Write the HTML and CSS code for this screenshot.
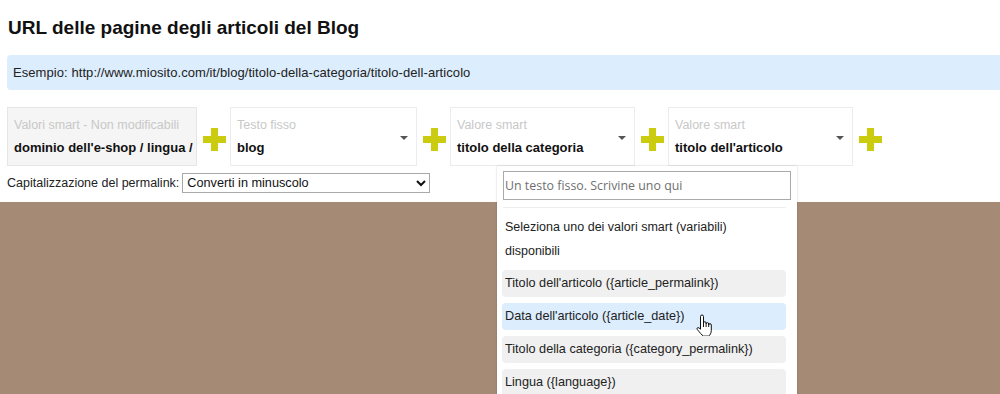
FILE: index.html
```html
<!DOCTYPE html>
<html lang="it">

<head>
    <meta charset="UTF-8">
    <title>URL delle pagine degli articoli del Blog</title>
    <link rel="stylesheet" href="styles.css">
</head>

<body>

    <div class="page">
        <h1>URL delle pagine degli articoli del Blog</h1>

        <div class="example">Esempio: http://www.miosito.com/it/blog/titolo-della-categoria/titolo-dell-articolo</div>

        <div class="fields">
            <div class="field field-locked w1">
                <div class="field-body">
                    <div class="field-label">Valori smart - Non modificabili</div>
                    <div class="field-value">dominio dell'e-shop / lingua /</div>
                </div>
            </div>
            <span class="plus"></span>
            <div class="field w2">
                <div class="field-body">
                    <div class="field-label">Testo fisso</div>
                    <div class="field-value">blog</div>
                </div>
                <span class="caret"></span>
            </div>
            <span class="plus"></span>
            <div class="field w3 field-open">
                <div class="field-body">
                    <div class="field-label">Valore smart</div>
                    <div class="field-value">titolo della categoria</div>
                </div>
                <span class="caret"></span>

                <!-- menu aperto sul terzo campo -->
                <div class="menu">
                    <input class="menu-input" type="text" placeholder="Un testo fisso. Scrivine uno qui">
                    <div class="menu-list">
                        <div class="menu-help">Seleziona uno dei valori smart (variabili) disponibili</div>
                        <div class="menu-item">Titolo dell'articolo ({article_permalink})</div>
                        <div class="menu-item active">Data dell'articolo ({article_date})
                            <svg class="hand" width="18" height="23" viewBox="0 0 18 23">
                                <path d="M5.5,2.5 a1.5,1.5 0 0 1 3,0 V9 a1.3,1.3 0 0 1 2.6,0 V10 a1.3,1.3 0 0 1 2.6,0 V11 a1.3,1.3 0 0 1 2.6,0 V16.5 c0,2.6 -1.4,4.6 -2.6,5.6 H8.3 c-1.6,-1.2 -3.4,-3.4 -6,-6.6 c-0.9,-1.1 0.3,-2.5 1.7,-1.6 L5.5,15.2 Z" fill="#fff" stroke="#111" stroke-width="1" stroke-linejoin="round"/>
                                <path d="M8.5,9 V13 M11.1,10 V13 M13.7,11 V13" stroke="#111" stroke-width="1"/>
                            </svg>
                        </div>
                        <div class="menu-item">Titolo della categoria ({category_permalink})</div>
                        <div class="menu-item">Lingua ({language})</div>
                    </div>
                </div>
            </div>
            <span class="plus"></span>
            <div class="field w3">
                <div class="field-body">
                    <div class="field-label">Valore smart</div>
                    <div class="field-value">titolo dell'articolo</div>
                </div>
                <span class="caret"></span>
            </div>
            <span class="plus"></span>
        </div>

        <div class="caps">
            <label for="caps">Capitalizzazione del permalink:</label>
            <select id="caps">
                <option>Converti in minuscolo</option>
                <option>Converti in maiuscolo</option>
                <option>Nessuna modifica</option>
            </select>
        </div>
    </div>

    <div class="backdrop"></div>

</body>

</html>
```

FILE: styles.css
```css
html,
body {
    height: 100%;
}

body {
    margin: 0;
    font-family: 'Liberation Sans', Arial, sans-serif;
    font-size: 13px;
    color: #222;
    display: flex;
    flex-direction: column;
    overflow: hidden;
}

.page {
    background: white;
    padding: 17px 0 9px 7px;
}

h1 {
    margin: 0 0 16px 1px;
    font-size: 19px;
    line-height: 22px;
    color: #111;
}

.example {
    background: #dcedfd;
    border-radius: 4px 0 0 4px;
    height: 35px;
    line-height: 35px;
    padding-left: 6px;
    color: #222;
    letter-spacing: 0.07px;
}

.fields {
    display: flex;
    margin-top: 17px;
}

.field {
    position: relative;
    display: flex;
    box-sizing: border-box;
    height: 59px;
    padding: 8px 8px 8px 6px;
    border: 1px solid #ececec;
    background: white;
}

.field-locked {
    background: #f5f5f5;
    border-color: #e6e6e6;
}

.w1 {
    width: 190px;
}

.w2 {
    width: 187px;
}

.w3 {
    width: 185px;
}

.field-body {
    flex: 1;
    white-space: nowrap;
}

.field-label {
    line-height: 18px;
    font-size: 12.5px;
    color: #c8c8c8;
}

.field-value {
    margin-top: 5px;
    line-height: 18px;
    font-weight: bold;
    color: #111;
}

.caret {
    align-self: center;
    margin-top: 3px;
    width: 0;
    height: 0;
    border-left: 4px solid transparent;
    border-right: 4px solid transparent;
    border-top: 4px solid #555;
}

.plus {
    position: relative;
    flex: none;
    width: 23px;
    height: 23px;
    margin: 21px 4px 0 6px;
}

.plus::before,
.plus::after {
    content: "";
    position: absolute;
    background: #cbcb10;
}

.plus::before {
    left: 0;
    right: 0;
    top: 8px;
    height: 7px;
}

.plus::after {
    top: 0;
    bottom: 0;
    left: 8px;
    width: 7px;
}

.caps {
    display: flex;
    align-items: center;
    margin-top: 7px;
    height: 20px;
    font-size: 12.5px;
}

.caps select {
    margin-left: 3px;
    width: 248px;
    height: 20px;
    border: 1px solid #a9a9a9;
    font-family: 'Liberation Sans', Arial, sans-serif;
    font-size: 12.7px;
    color: #111;
    background: white;
    padding: 0;
}

.backdrop {
    flex: 1;
    background: #a58b76;
}

/* menu a tendina */
.menu {
    position: absolute;
    left: 46px;
    top: 58px;
    z-index: 5;
    width: 300px;
    height: 240px;
    box-sizing: border-box;
    padding: 5px 6px 0 6px;
    background: white;
    box-shadow: 0 0 2px rgba(0, 0, 0, 0.2);
}

.menu-input {
    display: block;
    box-sizing: border-box;
    width: 100%;
    height: 29px;
    margin: 0;
    padding: 0 1px;
    border: 1px solid #aaa;
    font-family: 'Open Sans', sans-serif;
    font-size: 12.4px;
}

.menu-input::placeholder {
    color: #6f6f6f;
}

.menu-list {
    margin-top: 7px;
    margin-right: 5px;
    border-top: 1px solid #eee;
    padding-top: 7px;
}

.menu-help {
    max-width: 240px;
    padding-left: 2px;
    line-height: 24px;
    margin-bottom: 7px;
    font-size: 12.5px;
}

.menu-item {
    position: relative;
    height: 27px;
    line-height: 27px;
    padding-left: 3px;
    margin: 0 0 6px -1px;
    border-radius: 4px;
    background: #f0f0f0;
    white-space: nowrap;
    font-size: 12.7px;
}

.menu-item.active {
    background: #dcedfd;
}

.hand {
    position: absolute;
    left: 193px;
    top: 11px;
}
```
